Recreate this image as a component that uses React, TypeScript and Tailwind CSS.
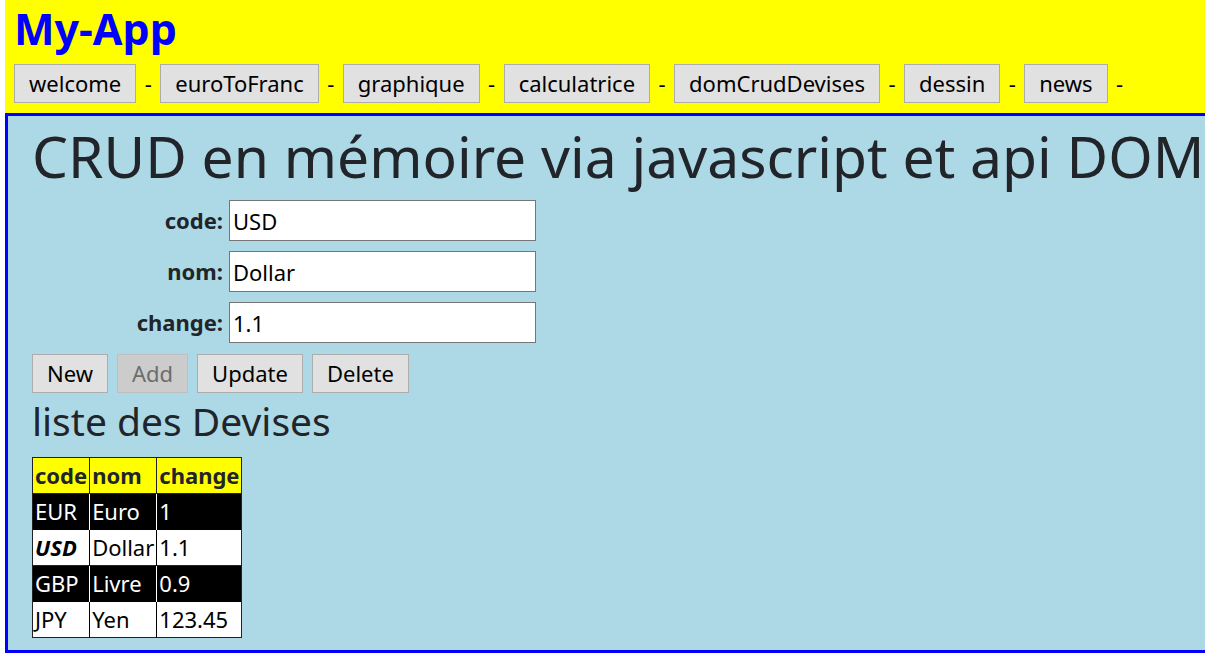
import React, { useState } from "react";

interface Devise {
  code: string;
  nom: string;
  change: number;
}

const pages = [
  "welcome",
  "euroToFranc",
  "graphique",
  "calculatrice",
  "domCrudDevises",
  "dessin",
  "news",
];

const initialDevises: Devise[] = [
  { code: "EUR", nom: "Euro", change: 1 },
  { code: "USD", nom: "Dollar", change: 1.1 },
  { code: "GBP", nom: "Livre", change: 0.9 },
  { code: "JPY", nom: "Yen", change: 123.45 },
];

const btn =
  "h-[39px] px-[14px] bg-[#e1e1e1] border border-[#adadad] text-[22px] text-black";

const Header: React.FC = () => (
  <header className="bg-[#ffff00] pl-[9px] pt-[5px] pb-[10px]">
    <h1 className="text-[43px] leading-[47px] font-bold text-[#0000ff]">My-App</h1>
    <nav className="mt-[12px] flex items-center">
      {pages.map((p) => (
        <React.Fragment key={p}>
          <button className={btn}>{p}</button>
          <span className="w-[24px] text-center text-[22px] text-black">-</span>
        </React.Fragment>
      ))}
    </nav>
  </header>
);

const App: React.FC = () => {
  const [devises] = useState<Devise[]>(initialDevises);
  const [code, setCode] = useState("USD");
  const [nom, setNom] = useState("Dollar");
  const [change, setChange] = useState("1.1");
  const selected = "USD";

  const fields = [
    { label: "code:", value: code, set: setCode },
    { label: "nom:", value: nom, set: setNom },
    { label: "change:", value: change, set: setChange },
  ];

  return (
    <div className="w-[1205px] h-[671px] overflow-hidden bg-white font-['Noto_Sans',sans-serif]">
      <div className="ml-[5px] w-[1240px]">
        <Header />
        <main className="bg-[#add8e6] border-[3px] border-[#0000ff] pl-[24px] pb-[12px] text-[#212529]">
          <h2 className="text-[57px] leading-[68px] mt-[6px] whitespace-nowrap">
            CRUD en mémoire via javascript et api DOM
          </h2>
          <div className="mt-[10px] flex flex-col gap-[10px]">
            {fields.map((f) => (
              <div key={f.label} className="flex items-center">
                <label className="w-[197px] pr-[6px] text-right font-bold text-[22px]">
                  {f.label}
                </label>
                <input
                  value={f.value}
                  onChange={(e) => f.set(e.target.value)}
                  className="w-[307px] h-[41px] bg-white border border-[#767676] px-[3px] text-[22px] text-black outline-none"
                />
              </div>
            ))}
          </div>
          <div className="mt-[11px] flex gap-[9px]">
            <button className={btn}>New</button>
            <button
              disabled
              className="h-[39px] px-[14px] bg-[#cccccc] border border-[#bfbfbf] text-[22px] text-[#6d6d6d]"
            >
              Add
            </button>
            <button className={btn}>Update</button>
            <button className={btn}>Delete</button>
          </div>
          <h3 className="text-[39px] leading-[52px] mt-[2px]">liste des Devises</h3>
          <table className="mt-[10px] border-collapse border border-[#222] text-[22px]">
            <thead>
              <tr className="bg-[#ffff00] font-bold">
                <th className="px-[2px] h-[36px] text-left">code</th>
                <th className="border-l border-[#222] px-[2px] text-left">nom</th>
                <th className="border-l border-[#222] px-[2px] text-left">change</th>
              </tr>
            </thead>
            <tbody>
              {devises.map((d, i) => {
                const dark = i % 2 === 0;
                const sep = dark ? "border-l border-white" : "border-l border-black";
                return (
                  <tr
                    key={d.code}
                    className={
                      dark
                        ? "bg-black text-white border-t border-[#222]"
                        : "bg-white text-black"
                    }
                  >
                    <td
                      className={`px-[2px] h-[36px] ${
                        d.code === selected ? "font-bold italic" : ""
                      }`}
                    >
                      {d.code}
                    </td>
                    <td className={`${sep} px-[2px]`}>{d.nom}</td>
                    <td className={`${sep} px-[2px]`}>{d.change}</td>
                  </tr>
                );
              })}
            </tbody>
          </table>
        </main>
      </div>
    </div>
  );
};

export default App;
